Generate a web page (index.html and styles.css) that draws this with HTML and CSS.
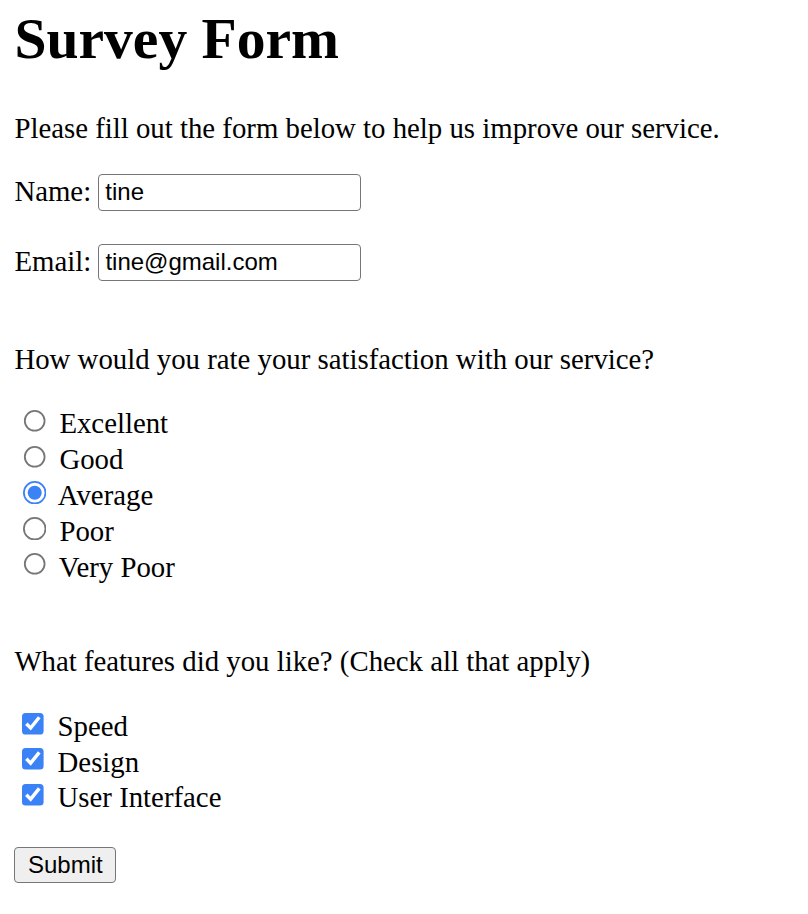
FILE: index.html
```html
<!DOCTYPE html>
<html lang="en">
<head>
    <meta charset="UTF-8">
    <meta name="viewport" content="width=device-width, initial-scale=1.0">
    <title>Survey Form</title>
    <link rel="stylesheet" href="styles.css">
</head>
<body>
    <h1>Survey Form</h1>
    <p>Please fill out the form below to help us improve our service.</p>

    <form class="survey-form">
        <label for="name">Name:</label>
        <input type="text" id="name" name="name" value="tine"><br><br>

        <label for="email">Email:</label>
        <input type="email" id="email" name="email" value="tine@gmail.com"><br><br>

        <!-- Satisfaction rating -->
        <p>How would you rate your satisfaction with our service?</p>
        <input type="radio" id="excellent" name="rating" value="excellent"> <label for="excellent">Excellent</label><br>
        <input type="radio" id="good" name="rating" value="good"> <label for="good">Good</label><br>
        <input type="radio" id="average" name="rating" value="average" checked> <label for="average">Average</label><br>
        <input type="radio" id="poor" name="rating" value="poor"> <label for="poor">Poor</label><br>
        <input type="radio" id="very-poor" name="rating" value="very-poor"> <label for="very-poor">Very Poor</label><br>
        <br>

        <!-- Features -->
        <p>What features did you like? (Check all that apply)</p>
        <input type="checkbox" id="speed" name="features" value="speed" checked> <label for="speed">Speed</label><br>
        <input type="checkbox" id="design" name="features" value="design" checked> <label for="design">Design</label><br>
        <input type="checkbox" id="ui" name="features" value="ui" checked> <label for="ui">User Interface</label><br>
        <br>

        <button type="submit">Submit</button>
    </form>
</body>
</html>
```

FILE: styles.css
```css
body {
    font-family: "Liberation Serif", "Times New Roman", serif;
    font-size: 28.8px;
    color: #000;
    background-color: #fff;
    margin: 0 14.4px;
}

h1 {
    font-size: 57.6px;
    font-weight: bold;
    margin: 6px 0 41px;
}

p {
    margin: 28.8px 0;
}

input[type="text"],
input[type="email"] {
    box-sizing: border-box;
    width: 263px;
    height: 37px;
    padding: 0 6px;
    font-family: "Liberation Sans", Arial, sans-serif;
    font-size: 24px;
    color: #000;
    border: 1px solid #767676;
    border-radius: 4px;
}

/* native controls scaled up to match the text size */
input[type="radio"] {
    zoom: 1.8;
    width: 13px;
    height: 13px;
    margin: 3px 3px 0 5px;
    accent-color: #3b82f6;
}

input[type="checkbox"] {
    zoom: 1.8;
    width: 13px;
    height: 13px;
    margin: 3px 3px 3px 4px;
    accent-color: #3b82f6;
}

button {
    height: 36px;
    padding: 0 12.6px;
    font-family: "Liberation Sans", Arial, sans-serif;
    font-size: 24px;
    color: #000;
    background-color: #efefef;
    border: 1px solid #767676;
    border-radius: 4px;
}
```
